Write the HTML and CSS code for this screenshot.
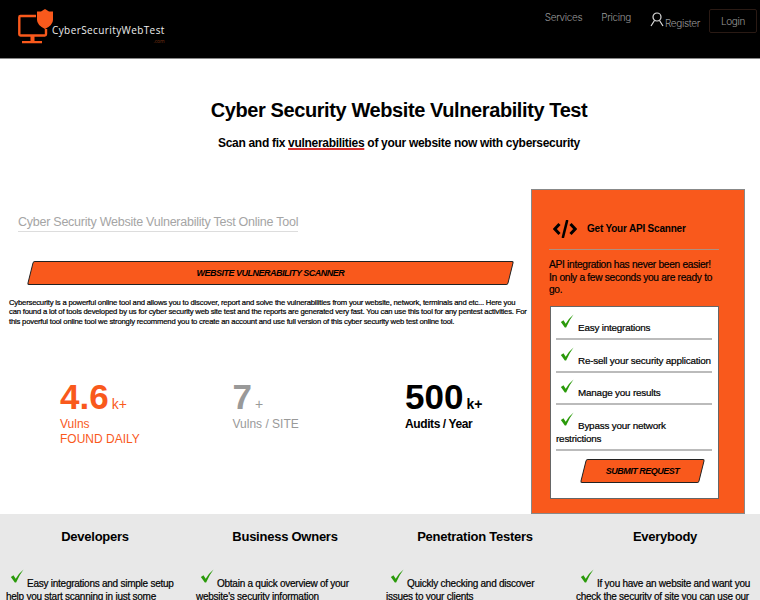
FILE: index.html
```html
<!DOCTYPE html>
<html>
<head>
<meta charset="utf-8">
<title>Cyber Security Website Vulnerability Test</title>
<link rel="stylesheet" href="styles.css">
</head>
<body>
<header class="topbar">
    <a class="logo" href="#">
        <svg class="logo-mark" width="36" height="36" viewBox="0 0 36 36">
            <path d="M18 7H2.500Q1.300 7 1.300 8.200V25.300Q1.300 26.500 2.500 26.500H26.800Q28 26.500 28 25.300V20" fill="none" stroke="#f9591c" stroke-width="2.400"/>
            <path d="M12.500 26h4v6h-4zM4 32h20v2.200H4z" fill="#f9591c"/>
            <path d="M27 0 31 2.500H35V11Q35 16 27 20 19 16 19 11V2.500H23Z" fill="#f9591c"/>
        </svg>
        <span class="logo-name">CyberSecurityWebTest<small>.com</small></span>
    </a>
    <nav class="nav">
        <a href="#">Services</a>
        <a href="#">Pricing</a>
        <a class="nav-register" href="#">
            <svg width="14" height="15" viewBox="0 0 14 15"><circle cx="7" cy="5" r="4" fill="none" stroke="#ddd" stroke-width="1.200"/><path d="M1 14 4.500 8.500M13 14 9.500 8.500" fill="none" stroke="#ddd" stroke-width="1.200"/></svg>Register
        </a>
        <a class="nav-login" href="#">Login</a>
    </nav>
</header>

<section class="hero">
    <h1>Cyber Security Website Vulnerability Test</h1>
    <h2>Scan and fix <u>vulnerabilities</u> of your website now with cybersecurity</h2>
</section>

<main class="main">
    <div class="intro">
        <div class="tool-title"><span>Cyber Security Website Vulnerability Test Online Tool</span></div>
        <a class="slant-btn scanner-btn" href="#"><span>WEBSITE VULNERABILITY SCANNER</span></a>
        <p class="about">Cybersecurity is a powerful online tool and allows you to discover, report and solve the vulnerabilities from your website, network, terminals and etc... Here you<br>can found a lot of tools developed by us for cyber security web site test and the reports are generated very fast. You can use this tool for any pentest activities. For<br>this poverful tool online tool we strongly recommend you to create an account and use full version of this cyber security web test online tool.</p>
        <div class="stats">
            <div class="stat stat-orange"><b>4.6</b><i>k+</i><p>Vulns<br>FOUND DAILY</p></div>
            <div class="stat stat-grey"><b>7</b><i>+</i><p>Vulns / SITE</p></div>
            <div class="stat stat-black"><b>500</b><i>k+</i><p>Audits / Year</p></div>
        </div>
    </div>

    <aside class="api-card">
        <div class="api-head">
            <svg width="24" height="18" viewBox="0 0 24 18"><path d="M6.500 4 1.800 9 6.500 14M17.500 4 22.200 9 17.500 14" fill="none" stroke="#000" stroke-width="3"/><path d="M14 1 10 17" fill="none" stroke="#000" stroke-width="2.600" stroke-linecap="round"/></svg>
            <b>Get Your API Scanner</b>
        </div>
        <p class="api-text">API integration has never been easier! In only a few seconds you are ready to go.</p>
        <div class="api-box">
            <ul>
                <li><svg class="check" viewBox="0 0 16 16"><path d="M1 9 4 7 6.500 11Q10 5 15.500 0.500 11 6 7 15.500H5.500Z" fill="#2a9a0a"/></svg>Easy integrations</li>
                <li><svg class="check" viewBox="0 0 16 16"><path d="M1 9 4 7 6.500 11Q10 5 15.500 0.500 11 6 7 15.500H5.500Z" fill="#2a9a0a"/></svg>Re-sell your security application</li>
                <li><svg class="check" viewBox="0 0 16 16"><path d="M1 9 4 7 6.500 11Q10 5 15.500 0.500 11 6 7 15.500H5.500Z" fill="#2a9a0a"/></svg>Manage you results</li>
                <li><svg class="check" viewBox="0 0 16 16"><path d="M1 9 4 7 6.500 11Q10 5 15.500 0.500 11 6 7 15.500H5.500Z" fill="#2a9a0a"/></svg>Bypass your network<br>restrictions</li>
            </ul>
            <a class="slant-btn submit-btn" href="#"><span>SUBMIT REQUEST</span></a>
        </div>
    </aside>
</main>

<section class="audience">
    <div class="who">
        <h3>Developers</h3>
        <p><svg class="check" viewBox="0 0 16 16"><path d="M1 9 4 7 6.500 11Q10 5 15.500 0.500 11 6 7 15.500H5.500Z" fill="#2a9a0a"/></svg>Easy integrations and simple setup help you start scanning in just some</p>
    </div>
    <div class="who">
        <h3>Business Owners</h3>
        <p><svg class="check" viewBox="0 0 16 16"><path d="M1 9 4 7 6.500 11Q10 5 15.500 0.500 11 6 7 15.500H5.500Z" fill="#2a9a0a"/></svg>Obtain a quick overview of your website's security information</p>
    </div>
    <div class="who">
        <h3>Penetration Testers</h3>
        <p><svg class="check" viewBox="0 0 16 16"><path d="M1 9 4 7 6.500 11Q10 5 15.500 0.500 11 6 7 15.500H5.500Z" fill="#2a9a0a"/></svg>Quickly checking and discover<br>issues to your clients</p>
    </div>
    <div class="who">
        <h3>Everybody</h3>
        <p><svg class="check" viewBox="0 0 16 16"><path d="M1 9 4 7 6.500 11Q10 5 15.500 0.500 11 6 7 15.500H5.500Z" fill="#2a9a0a"/></svg>If you have an website and want you check the security of site you can use our</p>
    </div>
</section>
</body>
</html>
```

FILE: styles.css
```css
* {
    box-sizing: border-box;
}

html, body {
    margin: 0;
    padding: 0;
    height: 600px;
    overflow: hidden;
}

body {
    font-family: "Liberation Sans", Arial, sans-serif;
    color: #000;
    background-color: #fff;
}

a {
    text-decoration: none;
    color: inherit;
}

/* top bar */
.topbar {
    display: flex;
    justify-content: space-between;
    height: 59px;
    padding: 9px 3px 0 18px;
    background-color: #000;
    border-bottom: 1px solid #888;
}

.logo {
    display: flex;
    align-items: flex-start;
}

.logo-name {
    position: relative;
    margin: 14px 0 0 -2px;
    font-family: "Open Sans", sans-serif;
    font-size: 10px;
    letter-spacing: .4px;
    color: #eee;
}

.logo-name small {
    position: absolute;
    right: 0;
    top: 15px;
    font-size: 5px;
    letter-spacing: 0;
    color: #7a3214;
}

.nav {
    display: flex;
    align-items: flex-start;
    font-family: Inter, sans-serif;
    font-size: 10px;
    font-weight: 300;
    letter-spacing: -.35px;
    color: #999;
}

.nav a {
    margin-left: 19px;
    padding-top: 2px;
}

.nav-register {
    display: flex;
    align-items: flex-end;
    gap: 1px;
    padding-top: 3px !important;
    line-height: 8px;
}

.nav .nav-login {
    width: 48px;
    height: 24px;
    margin-left: 9px;
    padding-top: 5px;
    text-align: center;
    border: 1px solid #2a1a14;
    border-radius: 2px;
}

/* hero */
.hero {
    padding: 39px 0 0 38px;
    text-align: center;
}

.hero h1 {
    margin: 0;
    font-size: 20px;
    line-height: 24px;
    letter-spacing: -.4px;
}

.hero h2 {
    margin: 13px 0 0;
    font-size: 12px;
    line-height: 16px;
    letter-spacing: -.3px;
}

.hero u {
    text-decoration: underline #d83030 1.500px;
    text-underline-offset: 1px;
}

/* main row */
.main {
    display: flex;
    align-items: flex-start;
    margin-top: 38px;
}

.intro {
    flex: 0 0 531px;
    min-width: 0;
    padding: 0 6px 0 9px;
}

.tool-title {
    padding: 25px 0 0 9px;
    font-size: 12.500px;
    line-height: 17px;
    letter-spacing: -.25px;
    color: #a5a5a5;
}

.tool-title span {
    display: inline-block;
    border-bottom: 1px solid #ddd;
}

.slant-btn {
    display: block;
    text-align: center;
    font-style: italic;
    font-weight: bold;
    letter-spacing: -.5px;
    background-color: #f9591c;
    border: 1px solid #222;
    border-radius: 2px;
    transform: skewX(-14deg);
}

.slant-btn span {
    display: block;
    transform: skewX(14deg);
}

.scanner-btn {
    width: 481px;
    height: 24px;
    margin: 29px 0 0 21px;
    font-size: 9px;
    line-height: 23px;
}

.about {
    margin: 13px 0 0;
    font-size: 7.700px;
    line-height: 9.300px;
    letter-spacing: -.2px;
    white-space: nowrap;
    -webkit-text-stroke: .2px #000;
}

.stats {
    display: flex;
    margin-top: 54px;
    padding-left: 51px;
}

.stat {
    flex: 0 0 172.500px;
}

.stat:last-child {
    flex: 1 1 auto;
}

.stat b {
    font-size: 35px;
    line-height: 34px;
}

.stat i {
    margin-left: 3px;
    font-style: normal;
    font-size: 14px;
    line-height: 14px;
}

.stat p {
    margin: 3px 0 0;
    font-size: 12px;
    line-height: 15px;
}

.stat-orange {
    color: #f9591c;
}

.stat-grey {
    color: #999;
}

.stat-black i, .stat-black p {
    font-weight: bold;
}

.stat-black p {
    letter-spacing: -.4px;
}

/* api card */
.api-card {
    flex: 0 0 214px;
    height: 325px;
    padding: 18px 25px 0 17px;
    background-color: #f9591c;
    border: 1px solid #888;
}

.api-head {
    display: flex;
    align-items: center;
    gap: 10px;
    height: 42px;
    padding-left: 4px;
    font-size: 10px;
    letter-spacing: -.2px;
    border-bottom: 1px solid #b09080;
}

.api-text {
    margin: 9px 0;
    font-size: 10.200px;
    line-height: 12.500px;
    letter-spacing: -.3px;
    -webkit-text-stroke: .2px #000;
}

.api-box {
    height: 193px;
    margin-left: 1px;
    padding: 0 6px 0 5px;
    background-color: #fff;
    border: 1px solid #666;
}

.api-box ul {
    margin: 0;
    padding: 0;
    list-style: none;
    font-size: 9.900px;
    line-height: 13px;
    letter-spacing: -.2px;
    -webkit-text-stroke: .2px #000;
}

.api-box li {
    padding: 6.500px 0 4px;
    white-space: nowrap;
    border-bottom: 2px solid #bbb;
}

.api-box li:first-child {
    padding-top: 7.500px;
}

.check {
    width: 14px;
    height: 14px;
    margin: 0 4px;
    vertical-align: 3px;
}

.submit-btn {
    width: 119px;
    height: 24px;
    margin: 8px 0 0 27px;
    font-size: 9px;
    line-height: 22px;
}

/* bottom band */
.audience {
    display: flex;
    height: 200px;
    background-color: #e8e8e8;
}

.who {
    flex: 0 0 190px;
    padding: 14px 6px 0;
}

.who h3 {
    margin: 0;
    font-size: 13px;
    line-height: 18px;
    letter-spacing: -.25px;
    text-align: center;
}

.who p {
    margin: 23px 0 0;
    font-size: 10px;
    line-height: 12.500px;
    letter-spacing: -.25px;
    -webkit-text-stroke: .2px #000;
}

.who .check {
    margin-right: 3px;
    vertical-align: 4px;
}
```
